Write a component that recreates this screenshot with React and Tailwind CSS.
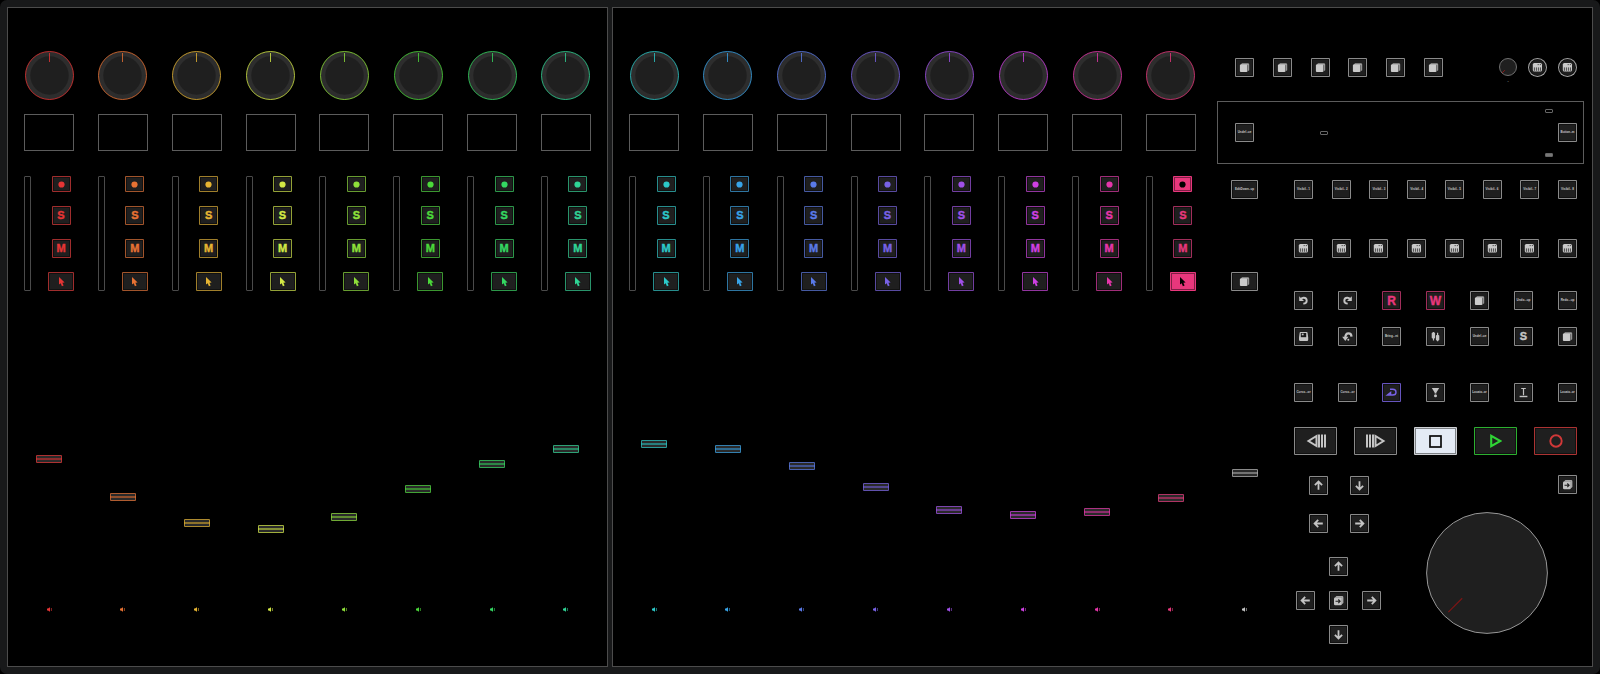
import React from "react";

const CHANNELS_LEFT = [
  { id: 1, tone: "text-[#e53535]", level: 137 },
  { id: 2, tone: "text-[#e87233]", level: 99 },
  { id: 3, tone: "text-[#e6b432]", level: 73 },
  { id: 4, tone: "text-[#d3e845]", level: 67 },
  { id: 5, tone: "text-[#8fe03a]", level: 79 },
  { id: 6, tone: "text-[#4bd83a]", level: 107 },
  { id: 7, tone: "text-[#34d862]", level: 132 },
  { id: 8, tone: "text-[#2fd495]", level: 147 },
];

const CHANNELS_RIGHT = [
  { id: 9, tone: "text-[#2cc9c9]", level: 152 },
  { id: 10, tone: "text-[#38a4e8]", level: 147 },
  { id: 11, tone: "text-[#5a7ae8]", level: 130 },
  { id: 12, tone: "text-[#7862e6]", level: 109 },
  { id: 13, tone: "text-[#a050e8]", level: 86 },
  { id: 14, tone: "text-[#d040e4]", level: 81 },
  { id: 15, tone: "text-[#e636aa]", level: 84 },
  { id: 16, tone: "text-[#e8377c]", level: 98, active: true },
];

const GREY = "text-[#c4c4c4]";

/* ---------- icons ---------- */

function Glyph({ children, className = "size-[19px]", box = "0 0 19 19" }) {
  return (
    <svg viewBox={box} className={"shrink-0 " + className} fill="none" stroke="none" aria-hidden="true">
      {children}
    </svg>
  );
}

const Dot = () => (
  <Glyph>
    <circle cx="9.5" cy="9.5" r="3.1" fill="currentColor" />
  </Glyph>
);

const Pointer = () => (
  <Glyph>
    <path d="M7 5v7.600l1.700-1.300 1.200 2.900 1.700-.7-1.200-2.800 2.200-.2z" fill="currentColor" />
  </Glyph>
);

const Cube = () => (
  <Glyph>
    <path d="M7 5.200h5.800q1.400 0 1.400 1.400v5.600l-1.800 1.400V7H5.400z" fill="#9c9c9c" />
    <rect x="4.900" y="6.600" width="7.500" height="7.500" rx="1" fill="#cbcbcb" />
    <path d="M12.700 7.200v6" stroke="#444" strokeWidth=".5" />
  </Glyph>
);

const CubeArrow = () => (
  <Glyph>
    <path d="M7.400 5h5.600q1.400 0 1.400 1.400V12l-1.800 1.400V6.800H5.800z" fill="#a8a8a8" />
    <rect x="5" y="6.400" width="7.800" height="7.800" rx="1.200" fill="#c4c4c4" />
    <path d="M6.500 10.300h4.400M9.300 8.500l1.800 1.800-1.800 1.800" stroke="#1f1f1f" strokeWidth="1.100" />
  </Glyph>
);

const Board = () => (
  <Glyph>
    <rect x="4.800" y="5" width="9.200" height="8.600" rx="1.600" fill="#c9c9c9" />
    <path d="M9.600 6.600h1.200M11.800 6.600H13" stroke="#444" strokeWidth=".9" />
    <path d="M6.400 9.400v3.400M8.400 9.400v3.400M10.400 9.400v3.400M12.400 9.400v3.400" stroke="#2a2a2a" strokeWidth=".8" />
  </Glyph>
);

const Undo = () => (
  <Glyph>
    <path d="M5.200 5.200v4.800h4.800z" fill="currentColor" />
    <path d="M6.800 8.200q1.200-1.500 3-1.400 2.900.2 2.900 2.900 0 2.800-3.400 2.900" stroke="currentColor" strokeWidth="1.900" />
  </Glyph>
);

const Redo = () => (
  <Glyph>
    <path d="M13.800 5.200v4.800H9z" fill="currentColor" />
    <path d="M12.200 8.200Q11 6.700 9.200 6.800q-2.900.2-2.900 2.900 0 2.800 3.400 2.900" stroke="currentColor" strokeWidth="1.900" />
  </Glyph>
);

const Disk = () => (
  <Glyph>
    <path d="M6.600 5h6q1 0 1 1l.6 4.600v2.200q0 1.200-1.200 1.200H6.200Q5 14 5 12.800v-2.200L5.600 6q0-1 1-1z" fill="currentColor" />
    <rect x="6.800" y="6" width="5.400" height="4.200" fill="#191919" />
    <rect x="7.800" y="6.600" width="1.800" height="1.700" fill="currentColor" />
  </Glyph>
);

const Revert = () => (
  <Glyph>
    <path d="M7.300 13.900 4.200 9.800h6.200z" fill="currentColor" />
    <path d="M7.300 11q0-4.600 3.200-4.600 2.900 0 3 3.200" stroke="currentColor" strokeWidth="2.200" />
    <circle cx="10.300" cy="12.800" r="1" fill="currentColor" />
  </Glyph>
);

const Faders = () => (
  <Glyph>
    <path d="M7.500 5v8.400M11.600 5.800v8.400" stroke="currentColor" strokeWidth="1.200" />
    <rect x="5.700" y="5.600" width="3.400" height="6" rx="1" fill="currentColor" />
    <rect x="9.900" y="8" width="3.400" height="5.600" rx="1" fill="currentColor" />
  </Glyph>
);

const Loop = () => (
  <Glyph>
    <path d="M8 6.200h2.800q3.200 0 3.200 3 0 2.800-3.200 2.800H5.400L8.600 9.400v2.400" stroke="currentColor" strokeWidth="1.400" />
  </Glyph>
);

const Marker = () => (
  <Glyph>
    <path d="M5.800 5h7.400l-2.800 4.400v1H8.600v-1z" fill="currentColor" />
    <circle cx="9.500" cy="12.700" r="1.500" fill="currentColor" />
  </Glyph>
);

const PunchBar = () => (
  <Glyph>
    <path d="M7.200 5.500h4.600M9.500 5.500v6.800" stroke="currentColor" strokeWidth="1.200" />
    <path d="M5.600 13.500h7.800" stroke="currentColor" strokeWidth="1.400" />
  </Glyph>
);

const ARROWS = {
  up: "M9.500 13.800V6M5.900 9.200l3.600-3.600 3.600 3.600",
  down: "M9.500 5.200V13M5.900 9.800l3.600 3.600 3.600-3.600",
  left: "M13.800 9.500H6M9.200 5.900 5.600 9.500l3.600 3.600",
  right: "M5.200 9.500H13M9.800 5.900l3.600 3.600-3.600 3.600",
};

const Arrow = ({ to }) => (
  <Glyph>
    <path d={ARROWS[to]} stroke="currentColor" strokeWidth="1.800" />
  </Glyph>
);

const Speaker = () => (
  <Glyph className="size-[7px]" box="0 0 7 7">
    <path d="M1 2.400h1L4 1.200v4.600L2 4.600H1z" fill="currentColor" />
    <path d="M5.400 2v3" stroke="currentColor" strokeWidth=".9" opacity=".7" />
  </Glyph>
);

/* ---------- controls ---------- */

function Pad({ label, size = "size-[19px]", tone = GREY, edge = "border-current/65", shape = "rounded-[1px]", active, fill = "bg-[#1f1f1f]", children }) {
  return (
    <button
      type="button"
      aria-label={label}
      aria-pressed={active}
      className={`flex shrink-0 items-center justify-center overflow-hidden border shadow-[inset_0_0_0_1px_rgba(0,0,0,0.45)] ${size} ${tone} ${edge} ${shape} ${fill}`}
    >
      {children}
    </button>
  );
}

const Tiny = ({ children }) => <span className="whitespace-nowrap text-[3px] leading-none font-bold text-[#c8c8c8]">{children}</span>;
const Letter = ({ children }) => <span className="text-[11px] leading-none font-bold [-webkit-text-stroke:0.4px_currentColor]">{children}</span>;
const BigLetter = ({ children }) => <span className="text-[12px] leading-none font-bold [-webkit-text-stroke:0.4px_currentColor]">{children}</span>;

function Knob({ label, tone }) {
  return (
    <label className={"relative block size-[49px] " + tone}>
      <input type="range" aria-label={label} className="absolute inset-0 size-full cursor-pointer opacity-0" />
      <svg viewBox="0 0 49 49" className="size-full" aria-hidden="true">
        <circle cx="24.500" cy="24.500" r="24" fill="#2d2d2d" stroke="currentColor" strokeOpacity=".8" />
        <circle cx="24.500" cy="24.500" r="19.200" fill="#1f1f1f" />
        <path d="M24.500 2v9" stroke="currentColor" strokeOpacity=".8" />
      </svg>
    </label>
  );
}

function Fader({ label, tone, level }) {
  return (
    <input
      type="range"
      aria-label={label}
      min="0"
      max="272"
      defaultValue={level}
      className={`mt-[29px] block h-[280px] w-[26px] appearance-none bg-transparent [direction:rtl] [writing-mode:vertical-lr] [&::-webkit-slider-thumb]:h-[8px] [&::-webkit-slider-thumb]:w-[26px] [&::-webkit-slider-thumb]:appearance-none [&::-webkit-slider-thumb]:rounded-[1px] [&::-webkit-slider-thumb]:border [&::-webkit-slider-thumb]:border-current/70 [&::-webkit-slider-thumb]:bg-[linear-gradient(#2a2a2a_0_2px,color-mix(in_srgb,currentColor_55%,#222)_2px_4px,#2a2a2a_4px)] ${tone}`}
    />
  );
}

function Channel({ id, tone, level, active }) {
  const on = active ? "text-[#e8377c]" : tone;
  return (
    <section aria-label={"Channel " + id} className="flex w-[50px] flex-col items-center">
      <Knob label={"Pan " + id} tone={tone} />
      <div className="mt-[14px] h-[37px] w-full border border-[#5c5c5c]" />
      <div className="mt-[25px] flex w-full justify-between">
        <div className="w-[7px] rounded-[1px] border border-[#4a4a4a]" />
        <div className="flex flex-col items-center gap-[14px]">
          <Pad label={"Record " + id} size="h-[16px] w-[19px]" tone={on} active={!!active} fill={active ? "bg-[#e8377c]" : "bg-[#1f1f1f]"}>
            <span className={active ? "text-black" : ""}><Dot /></span>
          </Pad>
          <Pad tone={tone}><Letter>S</Letter></Pad>
          <Pad tone={tone}><Letter>M</Letter></Pad>
          <Pad label={"Select " + id} size="h-[19px] w-[26px]" tone={on} active={!!active} fill={active ? "bg-[#e8377c]" : "bg-[#1f1f1f]"}>
            <span className={active ? "text-black" : ""}><Pointer /></span>
          </Pad>
        </div>
      </div>
      <Fader label={"Volume " + id} tone={tone} level={level} />
      <div className={"mt-[6px] " + tone}><Speaker /></div>
    </section>
  );
}

const Bank = ({ channels }) => (
  <div className="flex justify-between pt-[43px]">
    {channels.map((c) => <Channel key={c.id} {...c} />)}
  </div>
);

const Row = ({ children, className = "" }) => <div className={"flex justify-between " + className}>{children}</div>;

const Led = ({ fill = "" }) => <span className={"block h-[4px] w-[8px] rounded-[1px] border border-[#666] " + fill} />;

const EIGHT = [1, 2, 3, 4, 5, 6, 7, 8];
const TRANSPORT = "h-[28px] w-[43px]";

function Navigation() {
  return (
    <div className="ml-[2px] flex flex-col items-center pt-[21px]">
      <div className="grid grid-cols-2 gap-x-[22px] gap-y-[19px]">
        <Pad label="Up"><Arrow to="up" /></Pad>
        <Pad label="Down"><Arrow to="down" /></Pad>
        <Pad label="Left"><Arrow to="left" /></Pad>
        <Pad label="Right"><Arrow to="right" /></Pad>
      </div>
      <div className="mt-[24px] grid grid-cols-3 gap-x-[14px] gap-y-[15px]">
        <div className="col-start-2"><Pad label="Zoom up"><Arrow to="up" /></Pad></div>
        <div className="col-start-1"><Pad label="Zoom left"><Arrow to="left" /></Pad></div>
        <Pad label="Zoom mode"><CubeArrow /></Pad>
        <Pad label="Zoom right"><Arrow to="right" /></Pad>
        <div className="col-start-2"><Pad label="Zoom down"><Arrow to="down" /></Pad></div>
      </div>
    </div>
  );
}

function JogWheel() {
  return (
    <div className="flex flex-col items-end pt-[20px]">
      <Pad label="Jog mode"><CubeArrow /></Pad>
      <label className="relative mt-[18px] mr-[29px] block size-[122px]">
        <input type="range" aria-label="Jog" className="absolute inset-0 size-full cursor-pointer opacity-0" />
        <svg viewBox="0 0 123 123" className="size-full" aria-hidden="true">
          <circle cx="61.500" cy="61.500" r="60.900" fill="#1f1f1f" stroke="#999" />
          <path d="M22.500 101l14-14" stroke="#7d1515" strokeWidth="1.200" />
        </svg>
      </label>
    </div>
  );
}

function MasterSection() {
  return (
    <div className="flex flex-col pt-[50px]">
      <div className="flex h-[19px] justify-between pr-[7px] pl-[18px]">
        <Row className="w-[208px]">
          {[1, 2, 3, 4, 5, 6].map((n) => <Pad key={n} label={"Function " + n}><Cube /></Pad>)}
        </Row>
        <Row className="w-[78px]">
          <div className="flex w-[18px] flex-col items-center">
            <label className="relative block size-[18px]">
              <input type="range" aria-label="Level" className="absolute inset-0 size-full opacity-0" />
              <svg viewBox="0 0 18 18" className="size-full" aria-hidden="true">
                <circle cx="9" cy="9" r="8.500" fill="#1f1f1f" stroke="#707070" />
                <path d="M3.200 14.800 5.800 12.200" stroke="#8a1818" strokeWidth="1" />
              </svg>
            </label>
            <span className="mt-[3px] text-[5px] leading-none text-[#999]">-</span>
          </div>
          <Pad label="Automation A" shape="rounded-full" edge="border-current/80"><Board /></Pad>
          <Pad label="Automation B" shape="rounded-full" edge="border-current/80"><Board /></Pad>
        </Row>
      </div>

      <div className="mt-[24px] flex h-[63px] items-center border border-[#5c5c5c] pr-[6px] pl-[17px]">
        <Pad><Tiny>Undef..ue</Tiny></Pad>
        <div className="ml-[66px]"><Led /></div>
        <div className="mr-[5px] ml-auto flex h-[48px] flex-col justify-between">
          <Led />
          <Led fill="bg-[#777]" />
        </div>
        <Pad><Tiny>Button..m</Tiny></Pad>
      </div>

      <div className="flex gap-[36px] pr-[7px] pl-[14px]">
        <div className="flex w-[27px] flex-col items-center pt-[16px]">
          <Pad size="h-[19px] w-[27px]"><Tiny>EditDown..up</Tiny></Pad>
          <div className="mt-[73px]"><Pad label="Master select" size="h-[19px] w-[27px]"><Cube /></Pad></div>
          <Fader label="Master volume" tone="text-[#b4b4b4]" level={123} />
          <div className={"mt-[6px] " + GREY}><Speaker /></div>
        </div>

        <div className="flex flex-1 flex-col pt-[16px]">
          <Row>{EIGHT.map((n) => <Pad key={n}><Tiny>Visibil.. {n}</Tiny></Pad>)}</Row>
          <Row className="mt-[40px]">{EIGHT.map((n) => <Pad key={n} label={"Automation " + n}><Board /></Pad>)}</Row>
          <Row className="mt-[33px]">
            <Pad label="Undo"><Undo /></Pad>
            <Pad label="Redo"><Redo /></Pad>
            <Pad tone="text-[#e8377c]"><BigLetter>R</BigLetter></Pad>
            <Pad tone="text-[#e8377c]"><BigLetter>W</BigLetter></Pad>
            <Pad label="Group"><Cube /></Pad>
            <Pad><Tiny>Undo...up</Tiny></Pad>
            <Pad><Tiny>Redo...up</Tiny></Pad>
          </Row>
          <Row className="mt-[17px]">
            <Pad label="Save"><Disk /></Pad>
            <Pad label="Revert"><Revert /></Pad>
            <Pad><Tiny>Bring...nt</Tiny></Pad>
            <Pad label="Mixer"><Faders /></Pad>
            <Pad><Tiny>Undef..ue</Tiny></Pad>
            <Pad><Letter>S</Letter></Pad>
            <Pad label="Layer"><Cube /></Pad>
          </Row>
          <Row className="mt-[37px]">
            <Pad><Tiny>Curso...or</Tiny></Pad>
            <Pad><Tiny>Curso...or</Tiny></Pad>
            <Pad label="Cycle" tone="text-[#7862e6]" edge="border-current/80"><Loop /></Pad>
            <Pad label="Marker"><Marker /></Pad>
            <Pad><Tiny>Locato..or</Tiny></Pad>
            <Pad label="Punch"><PunchBar /></Pad>
            <Pad><Tiny>Locato..or</Tiny></Pad>
          </Row>
          <Row className="mt-[25px]">
            <Pad label="Rewind" size={TRANSPORT}>
              <Glyph className="h-[14px] w-[20px]" box="0 0 20 14">
                <path d="M10.500 2v10L2.500 7z" stroke="currentColor" strokeWidth="2" />
                <path d="M13 .5v13M16 .5v13M19 .5v13" stroke="currentColor" strokeWidth="2" />
              </Glyph>
            </Pad>
            <Pad label="Fast forward" size={TRANSPORT}>
              <Glyph className="h-[14px] w-[20px]" box="0 0 20 14">
                <path d="M9.500 2v10l8-5z" stroke="currentColor" strokeWidth="2" />
                <path d="M1 .5v13M4 .5v13M7 .5v13" stroke="currentColor" strokeWidth="2" />
              </Glyph>
            </Pad>
            <Pad label="Stop" size={TRANSPORT} fill="bg-[#e4ebf5]" active={true}>
              <Glyph className="size-[13px]" box="0 0 13 13">
                <rect x="1" y="1" width="11" height="11" stroke="#0a0a0a" strokeWidth="1.700" />
              </Glyph>
            </Pad>
            <Pad label="Play" size={TRANSPORT} tone="text-[#2fd435]" edge="border-current/80">
              <Glyph className="h-[14px] w-[12px]" box="0 0 12 14">
                <path d="M1.200 1.800v10.400L10.400 7z" stroke="currentColor" strokeWidth="2.100" />
              </Glyph>
            </Pad>
            <Pad label="Record" size={TRANSPORT} tone="text-[#d03838]" edge="border-current/80">
              <Glyph className="size-[14px]" box="0 0 14 14">
                <circle cx="7" cy="7" r="5.700" stroke="currentColor" strokeWidth="1.900" />
              </Glyph>
            </Pad>
          </Row>
          <div className="flex justify-between">
            <Navigation />
            <JogWheel />
          </div>
        </div>
      </div>
    </div>
  );
}

export default function App() {
  return (
    <div className="min-h-screen bg-black font-['Liberation_Sans',Arial,sans-serif]">
      <main className="grid min-h-screen grid-cols-[601fr_981fr] gap-[4px] rounded-[7px] bg-[#18191a] p-[7px]">
        <section aria-label="Channels 1 to 8" className="border border-[#4c4c4c] bg-black px-4">
          <Bank channels={CHANNELS_LEFT} />
        </section>
        <section aria-label="Channels 9 to 16 and master" className="grid grid-cols-[567fr_367fr] gap-[21px] border border-[#4c4c4c] bg-black pr-2 pl-4">
          <Bank channels={CHANNELS_RIGHT} />
          <MasterSection />
        </section>
      </main>
    </div>
  );
}
